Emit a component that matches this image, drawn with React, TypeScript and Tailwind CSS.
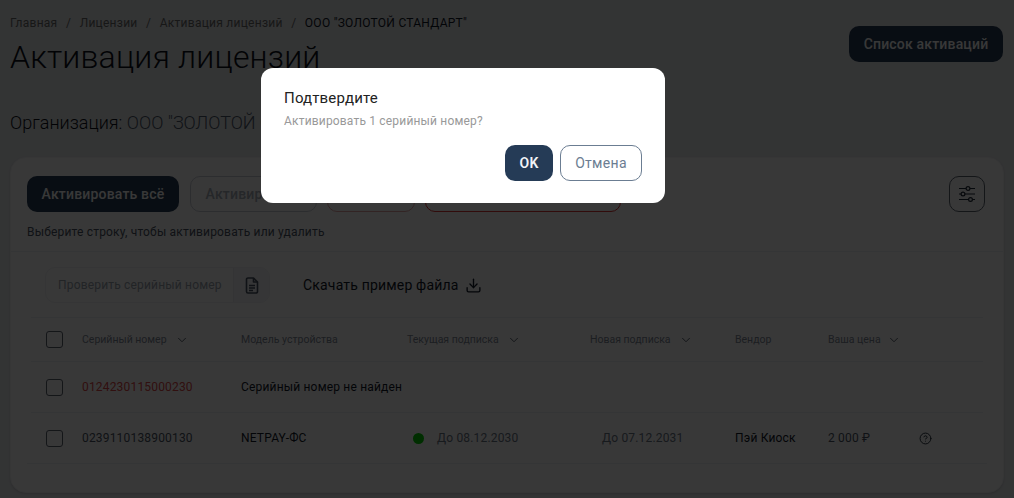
import { ChevronDown, Download, CircleHelp } from 'lucide-react'

const Check = () => <span className="block w-[17px] h-[17px] rounded-[3px] border border-[#5c6470] bg-white" />

const Head = ({ label, sort, gap = 'ml-2' }: { label: string; sort?: boolean; gap?: string }) => (
  <div className="flex items-center text-[10.5px] tracking-normal text-[#7f8998]">
    <span>{label}</span>
    {sort && <ChevronDown size={14} strokeWidth={1.5} className={`${gap} text-[#3f4a5a]`} />}
  </div>
)

// custom sliders glyph, the lucide one has vertical gaps instead of dots
const FilterIcon = () => (
  <svg width="18" height="16" viewBox="0 0 18 16" fill="none" stroke="#1f2937" strokeWidth="1.2">
    <path d="M1 2.5h16M1 8h16M1 13.5h16" />
    <circle cx="10" cy="2.5" r="1.9" fill="#ffffff" />
    <circle cx="5" cy="8" r="1.9" fill="#ffffff" />
    <circle cx="12.5" cy="13.5" r="1.9" fill="#ffffff" />
  </svg>
)

const DocIcon = () => (
  <svg width="14" height="17" viewBox="0 0 14 17" fill="none" stroke="#4b5563" strokeWidth="1.6" strokeLinejoin="round">
    <path d="M1.5 2.5a1.5 1.5 0 0 1 1.5-1.5h5.5l4 4v9.5a1.5 1.5 0 0 1-1.5 1.5H3a1.5 1.5 0 0 1-1.5-1.5z" />
    <path d="M8.5 1v4h4M4 8.5h6M4 11h6M4 13.5h4" />
  </svg>
)

export default function App() {
  return (
    <div className="relative w-[1014px] h-[498px] overflow-hidden bg-[#e9ebee] font-['Roboto',sans-serif] tracking-[0.18px] text-[#1a2433]">
      <div className="flex justify-between px-[10px] pt-[15px]">
        <div>
          <div className="flex items-center gap-[8.5px] h-[15px] text-xs tracking-[0.26px] text-[#6b6b6b]">
            <span>Главная</span>
            <span>/</span>
            <span>Лицензии</span>
            <span>/</span>
            <span>Активация лицензий</span>
            <span>/</span>
            <span className="text-[#111827]">ООО "ЗОЛОТОЙ СТАНДАРТ"</span>
          </div>
          <h1 className="mt-[5px] text-[32px] leading-[44px] font-light text-[#0b1018]">Активация лицензий</h1>
          <div className="mt-[32px] text-lg leading-6 font-light tracking-normal">
            <span className="text-[#0b1018]">Организация: </span>
            <span className="text-[#4b5768]">ООО "ЗОЛОТОЙ СТАНДАРТ"</span>
          </div>
        </div>
        <button className="mt-[11px] mr-px h-9 w-[154px] rounded-[10px] bg-[#253b56] text-sm font-medium text-white">
          Список активаций
        </button>
      </div>

      <div className="mx-[10px] mt-[22px] h-[336px] rounded-2xl border border-[#f3f4f6] bg-white shadow-sm">
        <div className="h-[94px] border-b border-[#eef0f3] px-4 pt-[18px]">
          <div className="flex items-start">
            <button className="h-9 w-[152px] rounded-[10px] bg-[#253b56] text-sm font-medium text-white">Активировать всё</button>
            <button className="ml-[11px] h-9 w-[127px] rounded-[10px] border border-[#c9ced6] text-sm font-medium text-[#a9b0bb]">Активировать</button>
            <button className="ml-[10px] h-9 w-[88px] rounded-[10px] border border-[#e5a5a5] text-sm text-[#d33]">Удалить</button>
            <button className="ml-[10px] h-9 w-[196px] rounded-[10px] border border-[#d33] text-sm text-[#d33]">Удалить все ошибочные</button>
            <button className="ml-auto mr-[2px] flex h-9 w-9 items-center justify-center rounded-[10px] border border-[#5c6470]">
              <FilterIcon />
            </button>
          </div>
          <p className="mt-[13px] text-xs leading-[14px] text-[#4b5563]">Выберите строку, чтобы активировать или удалить</p>
        </div>

        <div className="mx-5 flex h-[66px] items-start border-b border-[#eef0f3] pl-[14px] pt-[15px]">
          <div className="flex h-9 w-[225px] overflow-hidden rounded-[10px] border border-[#f0f1f4]">
            <div className="flex flex-1 items-center pl-3 text-xs text-[#9aa3af]">Проверить серийный номер</div>
            <div className="flex w-9 items-center justify-center border-l border-[#eceef1] bg-[#f3f5f8]">
              <DocIcon />
            </div>
          </div>
          <div className="ml-[33px] flex h-9 items-center text-sm text-[#111827]">
            Скачать пример файла
            <Download size={17} strokeWidth={1.9} className="ml-[6px]" />
          </div>
        </div>

        <div className="mx-5 grid h-11 grid-cols-[36px_159px_166px_183px_145px_93px_1fr] items-center border-b border-[#eef0f3] pl-[15px]">
          <Check />
          <Head label="Серийный номер" sort />
          <Head label="Модель устройства" />
          <Head label="Текущая подписка" sort />
          <Head label="Новая подписка" sort />
          <Head label="Вендор" />
          <Head label="Ваша цена" sort gap="ml-[6px]" />
        </div>

        <div className="mx-5 grid h-[51px] grid-cols-[36px_159px_1fr] items-center border-b border-[#eef0f3] pl-[15px] text-xs">
          <Check />
          <span className="text-[#e04848]">0124230115000230</span>
          <span className="text-[#111827]">Серийный номер не найден</span>
        </div>

        <div className="mx-4 grid h-[51px] grid-cols-[36px_159px_166px_183px_145px_93px_1fr] items-center border-b border-[#eef0f3] pl-[19px] text-xs">
          <Check />
          <span className="text-[#4b5563]">0239110138900130</span>
          <span className="text-[#111827]">NETPAY-ФС</span>
          <span className="flex items-center pl-[6px] text-[#6b7686]">
            <span className="mr-[13px] h-[11px] w-[11px] rounded-full bg-[#00d000]" />
            До 08.12.2030
          </span>
          <span className="pl-[12px] text-[#6b7686]">До 07.12.2031</span>
          <span className="text-[#111827]">Пэй Киоск</span>
          <span className="flex items-center text-[#4b5563]">
            <span className="w-[91px]">2 000 ₽</span>
            <CircleHelp size={13} strokeWidth={1.75} className="text-[#1f2937]" />
          </span>
        </div>
      </div>

      <div className="absolute inset-0 bg-black/[0.78]" />

      <div className="absolute left-[261px] top-[68px] h-[135px] w-[404px] rounded-xl bg-white px-[23px] pt-[21px]">
        <h2 className="text-[15px] leading-[19px] text-[#222]">Подтвердите</h2>
        <p className="mt-[5px] text-xs leading-[16px] text-[#999]">Активировать 1 серийный номер?</p>
        <div className="mt-[16px] flex justify-end gap-[7px]">
          <button className="h-9 w-12 rounded-[10px] bg-[#253b56] pb-px text-sm font-semibold text-[#f1f4f7]">OK</button>
          <button className="h-9 w-[82px] rounded-[10px] border border-[#6b7d92] pb-px text-sm tracking-[0.3px] text-[#6b7d92]">Отмена</button>
        </div>
      </div>
    </div>
  )
}
